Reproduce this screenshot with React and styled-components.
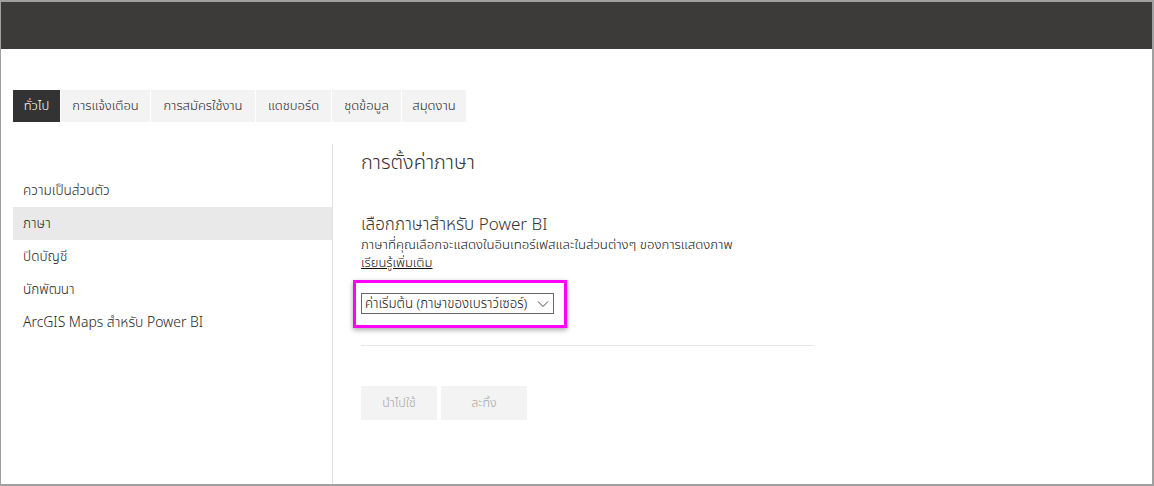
import React from "react";
import styled, { createGlobalStyle } from "styled-components";

const Global = createGlobalStyle`
  html, body { margin: 0; padding: 0; background: #fff; }
  body { font-family: "Noto Sans", "Noto Sans Thai", "Liberation Sans", sans-serif; color: #252423; }
  * { box-sizing: border-box; }
`;

const Frame = styled.div`
  width: 1154px;
  height: 486px;
  border-style: solid;
  border-color: #a0a0a0;
  border-width: 2px 2px 2px 1px;
  display: flex;
  flex-direction: column;
  overflow: hidden;
`;

const TopBar = styled.div`
  height: 47px;
  background: #3c3b39;
  flex: none;
`;

const Tabs = styled.div`
  display: flex;
  gap: 1px;
  margin: 41px 0 0 12px;
  height: 32px;
  flex: none;
`;

const Tab = styled.div`
  height: 32px;
  width: ${p => p.$w}px;
  display: flex;
  align-items: center;
  justify-content: center;
  font-size: 13px;
  font-weight: 350;
  background: ${p => (p.$active ? "#333333" : "#f3f3f3")};
  color: ${p => (p.$active ? "#fff" : "#252423")};
`;

const Body = styled.div`
  display: flex;
  flex: 1;
  margin-top: 22px;
`;

const Sidebar = styled.nav`
  width: 332px;
  padding: 30px 0 0 12px;
  border-right: 1px solid #e1e1e1;
  flex: none;
`;

const NavItem = styled.div`
  height: 33px;
  display: flex;
  align-items: center;
  padding-left: 10px;
  font-size: ${p => (p.$large ? 13.9 : 13.6)}px;
  font-weight: 350;
  color: #252423;
  background: ${p => (p.$selected ? "#e9e9e9" : "transparent")};
`;

const Content = styled.main`
  flex: 1;
  padding: 4px 0 0 28px;
  display: flex;
  flex-direction: column;
  align-items: flex-start;
`;

const Heading = styled.h1`
  margin: 0;
  font-size: 20px;
  font-weight: 300;
  line-height: 28px;
  color: #333;
`;

const SubHeading = styled.h2`
  margin: 36px 0 0;
  font-size: 17px;
  font-weight: 300;
  line-height: 24px;
  color: #333;
`;

const Desc = styled.p`
  margin: 0;
  font-size: 13.2px;
  font-weight: 350;
  line-height: 17px;
  color: #111;
`;

const Link = styled.a`
  font-size: 13px;
  font-weight: 350;
  line-height: 18px;
  color: #111;
  text-decoration: underline;
`;

const SelectWrap = styled.div`
  position: relative;
  margin-top: 22px;
`;

const Highlight = styled.div`
  position: absolute;
  left: -8px;
  top: -13px;
  right: -13px;
  bottom: -14px;
  border: 3px solid #ff00ff;
  box-shadow: 0 2px 5px rgba(0, 0, 0, 0.35);
  pointer-events: none;
`;

const Select = styled.div`
  width: 193px;
  height: 21px;
  border: 1px solid #666;
  display: flex;
  align-items: center;
  justify-content: space-between;
  padding: 0 4px 0 3px;
  font-size: 13.3px;
  font-weight: 350;
  color: #111;
  background: #fff;
`;

const Divider = styled.hr`
  width: 453px;
  margin: 31px 0 0;
  border: none;
  border-top: 1px solid #e6e6e6;
`;

const Buttons = styled.div`
  display: flex;
  gap: 4px;
  margin-top: 40px;
`;

const Button = styled.button`
  width: ${p => p.$w}px;
  height: 34px;
  border: none;
  background: #f3f3f3;
  color: #a6a6a6;
  font-family: inherit;
  font-size: 12.5px;
  font-weight: 350;
`;

const Chevron = () => (
  <svg width="12" height="8" viewBox="0 0 12 8" fill="none">
    <path d="M1 1.5l5 5 5-5" stroke="#444" strokeWidth="1" />
  </svg>
);

export default function App() {
  return (
    <>
      <Global />
      <Frame>
        <TopBar />
        <Tabs>
          <Tab $active $w={47}>ทั่วไป</Tab>
          <Tab $w={89}>การแจ้งเตือน</Tab>
          <Tab $w={104}>การสมัครใช้งาน</Tab>
          <Tab $w={75}>แดชบอร์ด</Tab>
          <Tab $w={69}>ชุดข้อมูล</Tab>
          <Tab $w={64}>สมุดงาน</Tab>
        </Tabs>
        <Body>
          <Sidebar>
            <NavItem>ความเป็นส่วนตัว</NavItem>
            <NavItem $selected>ภาษา</NavItem>
            <NavItem>ปิดบัญชี</NavItem>
            <NavItem>นักพัฒนา</NavItem>
            <NavItem $large>ArcGIS Maps สำหรับ Power BI</NavItem>
          </Sidebar>
          <Content>
            <Heading>การตั้งค่าภาษา</Heading>
            <SubHeading>เลือกภาษาสำหรับ Power BI</SubHeading>
            <Desc>ภาษาที่คุณเลือกจะแสดงในอินเทอร์เฟสและในส่วนต่างๆ ของการแสดงภาพ</Desc>
            <Link>เรียนรู้เพิ่มเติม</Link>
            <SelectWrap>
              <Select>
                <span>ค่าเริ่มต้น (ภาษาของเบราว์เซอร์)</span>
                <Chevron />
              </Select>
              <Highlight />
            </SelectWrap>
            <Divider />
            <Buttons>
              <Button $w={76}>นำไปใช้</Button>
              <Button $w={86}>ละทิ้ง</Button>
            </Buttons>
          </Content>
        </Body>
      </Frame>
    </>
  );
}
